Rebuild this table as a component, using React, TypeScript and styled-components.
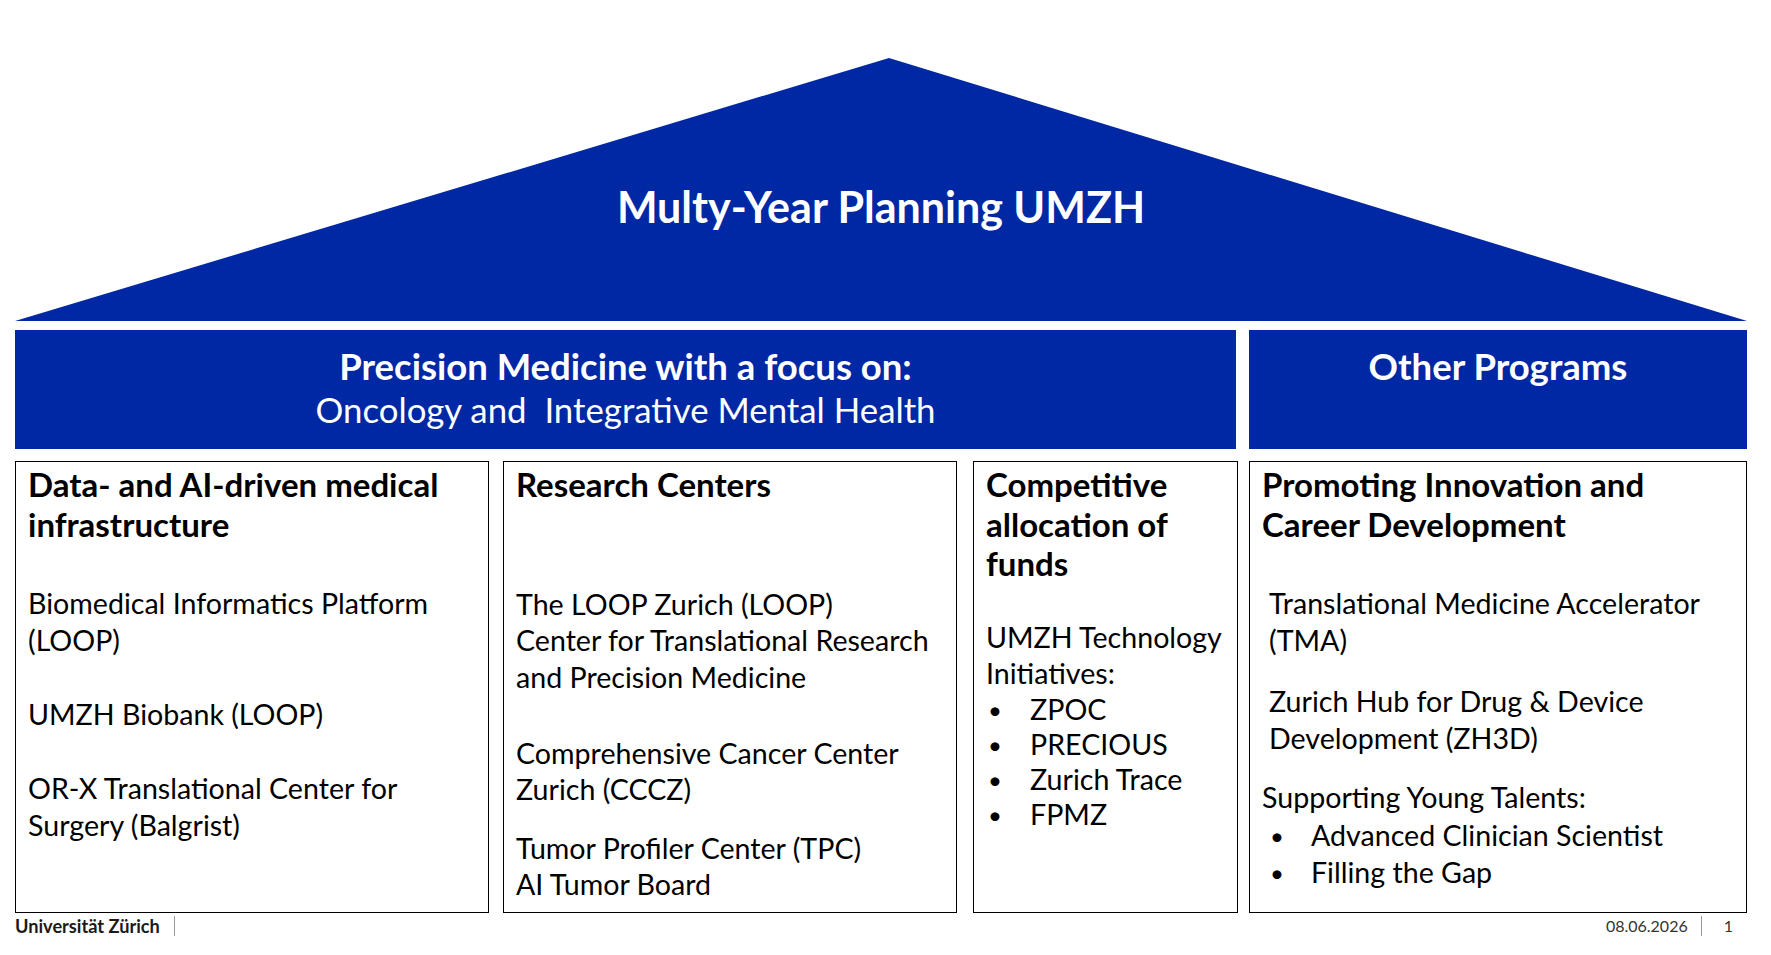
import styled, { createGlobalStyle } from 'styled-components';

const BLUE = '#0028a5';

const GlobalStyle = createGlobalStyle`
  html, body {
    margin: 0;
    padding: 0;
    background: #fff;
  }
  body {
    font-family: Lato, "Liberation Sans", sans-serif;
    color: #000;
  }
`;

const Page = styled.div`
  width: 1771px;
  height: 955px;
  box-sizing: border-box;
  padding: 58px 24px 0 15px;
  overflow: hidden;
`;

const Roof = styled.div`
  height: 263px;
  background: ${BLUE};
  clip-path: polygon(0 100%, 874px 0, 100% 100%);
  display: flex;
  align-items: flex-end;
  justify-content: center;
`;

const RoofTitle = styled.h1`
  margin: 0;
  padding-bottom: 88px;
  color: #fff;
  font-size: 43px;
  line-height: 52px;
  font-weight: 700;
`;

const BannerRow = styled.div`
  margin-top: 9px;
  display: grid;
  grid-template-columns: 1221px 498px;
  column-gap: 13px;
  height: 119px;
`;

const Banner = styled.div`
  background: ${BLUE};
  color: #fff;
  display: flex;
  flex-direction: column;
  align-items: center;
  padding-top: 14px;
  box-sizing: border-box;
`;

const BannerTitle = styled.div`
  font-size: 36.5px;
  line-height: 44px;
  font-weight: 700;
`;

const BannerSub = styled.div`
  font-size: 34.8px;
  line-height: 44px;
  font-weight: 400;
  white-space: pre;
`;

const Pillars = styled.div`
  margin-top: 12px;
  height: 452px;
  display: flex;
`;

const Pillar = styled.div<{ $w: number; $ml?: number }>`
  width: ${(p) => p.$w}px;
  margin-left: ${(p) => p.$ml ?? 0}px;
  flex: none;
  box-sizing: border-box;
  border: 1px solid #000;
  padding: 3px 0 0 12px;
  white-space: nowrap;
`;

const Heading = styled.h2`
  margin: 0;
  font-size: 33px;
  line-height: 39.5px;
  font-weight: 700;
`;

const Para = styled.p<{ $mt: number; $indent?: number }>`
  margin: ${(p) => p.$mt}px 0 0 ${(p) => p.$indent ?? 0}px;
  font-size: 28.6px;
  line-height: 36.5px;
`;

const List = styled.ul<{ $mt: number; $lh: number }>`
  list-style: none;
  margin: ${(p) => p.$mt}px 0 0 0;
  padding: 0;
  font-size: 28.6px;
  line-height: ${(p) => p.$lh}px;
`;

const Item = styled.li`
  display: flex;
`;

const Dot = styled.span<{ $x: number; $w: number }>`
  box-sizing: border-box;
  width: ${(p) => p.$w}px;
  padding-left: ${(p) => p.$x}px;
  flex: none;
  font-size: 24px;
`;

const Footer = styled.div`
  margin-top: 3px;
  display: flex;
  justify-content: space-between;
  align-items: center;
  line-height: 20px;
  padding-right: 14px;
`;

const FooterGroup = styled.div`
  display: flex;
  align-items: center;
`;

const Uni = styled.span`
  font-size: 18.2px;
  font-weight: 700;
  color: #1a1a1a;
`;

const Divider = styled.span<{ $l: number; $r: number }>`
  width: 0;
  height: 20px;
  border-left: 1px solid #9a9a9a;
  margin: 0 ${(p) => p.$r}px 0 ${(p) => p.$l}px;
`;

const Meta = styled.span`
  font-size: 16px;
  color: #333;
`;

function Bullets({ items, mt, lh, x, w }: { items: string[]; mt: number; lh: number; x: number; w: number }) {
  return (
    <List $mt={mt} $lh={lh}>
      {items.map((t) => (
        <Item key={t}>
          <Dot $x={x} $w={w}>•</Dot>
          <span>{t}</span>
        </Item>
      ))}
    </List>
  );
}

export default function App() {
  return (
    <>
      <GlobalStyle />
      <Page>
        <Roof>
          <RoofTitle>Multy-Year Planning UMZH</RoofTitle>
        </Roof>

        <BannerRow>
          <Banner>
            <BannerTitle>Precision Medicine with a focus on:</BannerTitle>
            <BannerSub>Oncology and  Integrative Mental Health</BannerSub>
          </Banner>
          <Banner>
            <BannerTitle>Other Programs</BannerTitle>
          </Banner>
        </BannerRow>

        <Pillars>
          <Pillar $w={474}>
            <Heading>Data- and AI-driven medical<br />infrastructure</Heading>
            <Para $mt={41}>Biomedical Informatics Platform<br />(LOOP)</Para>
            <Para $mt={38}>UMZH Biobank (LOOP)</Para>
            <Para $mt={37.5}>OR-X Translational Center for<br />Surgery (Balgrist)</Para>
          </Pillar>

          <Pillar $w={454} $ml={14}>
            <Heading>Research Centers</Heading>
            <Para $mt={81}>The LOOP Zurich (LOOP)<br />Center for Translational Research<br />and Precision Medicine</Para>
            <Para $mt={39.5}>Comprehensive Cancer Center<br />Zurich (CCCZ)</Para>
            <Para $mt={22}>Tumor Profiler Center (TPC)<br />AI Tumor Board</Para>
          </Pillar>

          <Pillar $w={265} $ml={16}>
            <Heading>Competitive<br />allocation of<br />funds</Heading>
            <Para $mt={35}>UMZH Technology<br />Initiatives:</Para>
            <Bullets items={['ZPOC', 'PRECIOUS', 'Zurich Trace', 'FPMZ']} mt={0} lh={35} x={2} w={44} />
          </Pillar>

          <Pillar $w={498} $ml={11}>
            <Heading>Promoting Innovation and<br />Career Development</Heading>
            <Para $mt={41} $indent={7}>Translational Medicine Accelerator<br />(TMA)</Para>
            <Para $mt={25} $indent={7}>Zurich Hub for Drug &amp; Device<br />Development (ZH3D)</Para>
            <Para $mt={23}>Supporting Young Talents:</Para>
            <Bullets items={['Advanced Clinician Scientist', 'Filling the Gap']} mt={1} lh={37} x={8} w={49} />
          </Pillar>
        </Pillars>

        <Footer>
          <FooterGroup>
            <Uni>Universität Zürich</Uni>
            <Divider $l={14} $r={0} />
          </FooterGroup>
          <FooterGroup>
            <Meta>08.06.2026</Meta>
            <Divider $l={13} $r={22} />
            <Meta>1</Meta>
          </FooterGroup>
        </Footer>
      </Page>
    </>
  );
}
